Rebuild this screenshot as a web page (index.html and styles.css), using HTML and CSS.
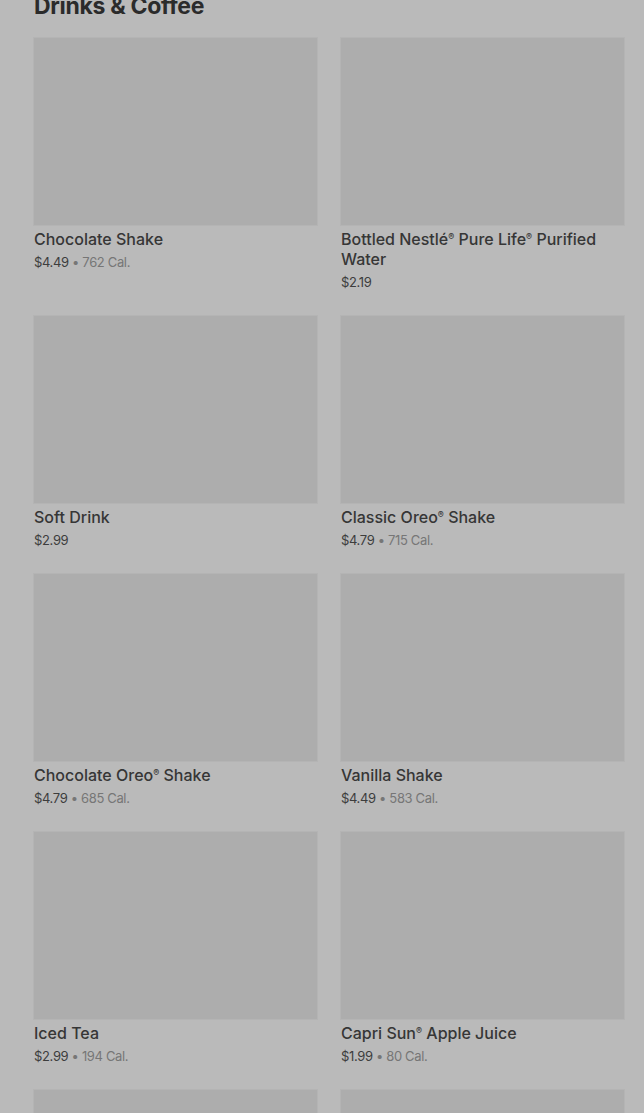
FILE: index.html
```html
<!DOCTYPE html>
<html lang="en">
<head>
    <meta charset="UTF-8">
    <meta name="viewport" content="width=device-width, initial-scale=1.0">
    <title>Drinks &amp; Coffee</title>
    <link rel="stylesheet" href="styles.css">
</head>
<body>
    <section class="menu-section">
        <h2 class="section-title">Drinks &amp; Coffee</h2>
        <div class="item-grid">
            <div class="item-card">
                <div class="item-image"></div>
                <div class="item-name">Chocolate Shake</div>
                <div class="item-meta"><span class="price">$4.49</span> • 762 Cal.</div>
            </div>
            <div class="item-card">
                <div class="item-image"></div>
                <div class="item-name">Bottled Nestlé<span class="reg">®</span> Pure Life<span class="reg">®</span> Purified Water</div>
                <div class="item-meta"><span class="price">$2.19</span></div>
            </div>
            <div class="item-card">
                <div class="item-image"></div>
                <div class="item-name">Soft Drink</div>
                <div class="item-meta"><span class="price">$2.99</span></div>
            </div>
            <div class="item-card">
                <div class="item-image"></div>
                <div class="item-name">Classic Oreo<span class="reg">®</span> Shake</div>
                <div class="item-meta"><span class="price">$4.79</span> • 715 Cal.</div>
            </div>
            <div class="item-card">
                <div class="item-image"></div>
                <div class="item-name">Chocolate Oreo<span class="reg">®</span> Shake</div>
                <div class="item-meta"><span class="price">$4.79</span> • 685 Cal.</div>
            </div>
            <div class="item-card">
                <div class="item-image"></div>
                <div class="item-name">Vanilla Shake</div>
                <div class="item-meta"><span class="price">$4.49</span> • 583 Cal.</div>
            </div>
            <div class="item-card">
                <div class="item-image"></div>
                <div class="item-name">Iced Tea</div>
                <div class="item-meta"><span class="price">$2.99</span> • 194 Cal.</div>
            </div>
            <div class="item-card">
                <div class="item-image"></div>
                <div class="item-name">Capri Sun<span class="reg">®</span> Apple Juice</div>
                <div class="item-meta"><span class="price">$1.99</span> • 80 Cal.</div>
            </div>
            <!-- next row, still loading below the fold -->
            <div class="item-card">
                <div class="item-image"></div>
            </div>
            <div class="item-card">
                <div class="item-image"></div>
            </div>
        </div>
    </section>
</body>
</html>
```

FILE: styles.css
```css
:root {
    --backdrop: #bababa;
    --placeholder: #adadad;
    --edge: #b4b4b4;
    --title-text: #2b2b2b;
    --name-text: #363636;
    --price-text: #3d3d3d;
    --muted-text: #767676;
}

body {
    margin: 0;
    background: var(--backdrop);
    font-family: Inter, "Noto Sans", sans-serif;
    overflow: hidden;
}

.menu-section {
    padding: 0 20px 0 34px;
}

.section-title {
    margin: -8px 0 18px;
    font-size: 23px;
    line-height: 28px;
    font-weight: 700;
    letter-spacing: -0.3px;
    color: var(--title-text);
}

.item-grid {
    display: grid;
    grid-template-columns: 1fr 1fr;
    column-gap: 24px;
    row-gap: 24px;
}

.item-image {
    height: 187px;
    background: var(--placeholder);
    box-shadow: 0 -1px 0 var(--edge), 0 0 0 1px var(--edge);
}

.item-name {
    margin-top: 4px;
    font-size: 16px;
    line-height: 20px;
    font-weight: 500;
    color: var(--name-text);
}

.reg {
    font-size: 9px;
    line-height: 1;
    vertical-align: 5px;
}

.item-meta {
    margin-top: 3px;
    font-size: 13px;
    line-height: 20px;
    letter-spacing: -0.35px;
    color: var(--muted-text);
}

.price {
    color: var(--price-text);
}
```
